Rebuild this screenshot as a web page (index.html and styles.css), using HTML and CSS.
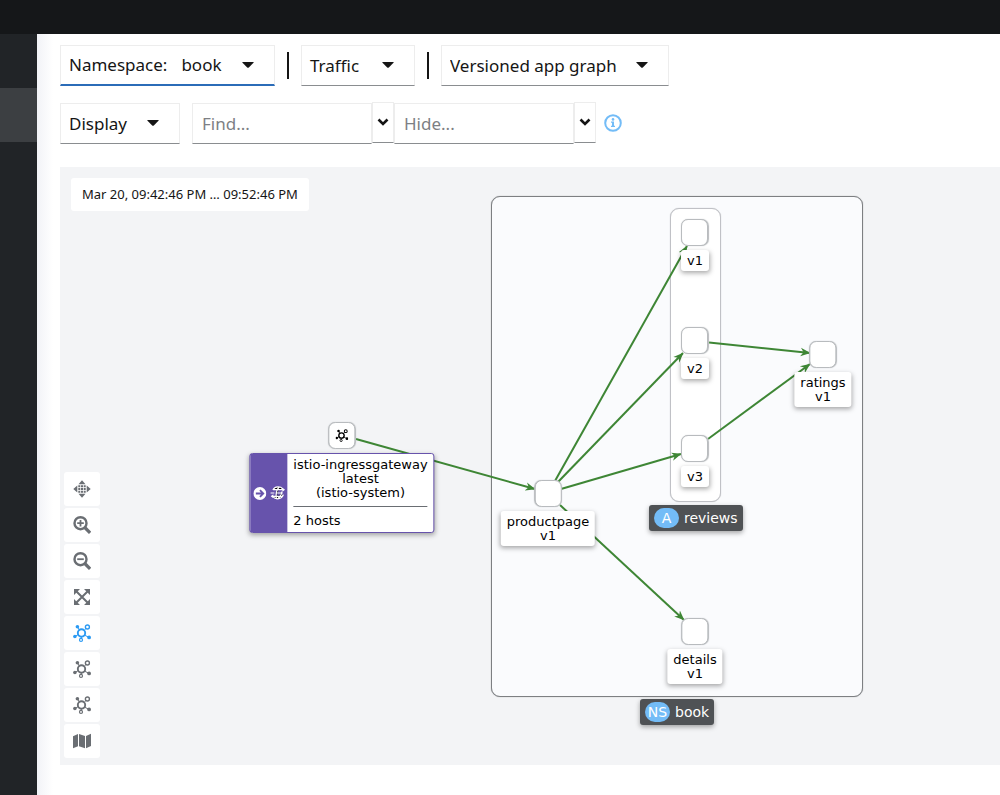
FILE: index.html
```html
<!DOCTYPE html>
<html lang="en">
<head>
<meta charset="utf-8">
<title>Graph</title>
<link rel="stylesheet" href="styles.css">
</head>
<body>
<svg class="defs" width="0" height="0" aria-hidden="true">
  <symbol id="caret" viewBox="0 0 12 6"><path d="M.8 0h10.4q.9 0 .3.8L6.800 5.500q-.8.700-1.600 0L.5.800Q-.1 0 .8 0z"/></symbol>
  <symbol id="chevron" viewBox="0 0 12 8"><path d="M1.500 1.500 6 6l4.500-4.500" fill="none" stroke="currentColor" stroke-width="2.600"/></symbol>
  <symbol id="topology" viewBox="0 0 18 18">
    <g fill="none" stroke="currentColor">
      <circle cx="8.500" cy="9" r="3.700" stroke-width="1.900"/>
      <circle cx="14.400" cy="3" r="2" stroke-width="1.400"/>
      <circle cx="8" cy="15.900" r="1.500" stroke-width="1.200"/>
      <path d="M11.300 6.200l1.700-1.700M6.400 6 4.500 3.200M5.200 10.600l-3 1.800M11.600 11.200l4.400 2.100M8.300 12.700v1.600" stroke-width="1"/>
    </g>
    <circle cx="4.400" cy="2.800" r="1.800"/><circle cx="1.900" cy="12.500" r="1.800"/><circle cx="16.100" cy="13.400" r="1.900"/>
  </symbol>
</svg>
<header class="masthead"></header>
<div class="shell">
  <nav class="sidebar" aria-label="Main"><a class="sidebar-active" href="#graph" aria-label="Graph"></a></nav>
  <main class="content">
    <div class="toolbar">
      <button class="toggle toggle-namespace" type="button" aria-haspopup="true"><span>Namespace:</span><span class="toggle-value">book</span><svg class="caret"><use href="#caret"/></svg></button>
      <span class="divider"></span>
      <button class="toggle toggle-traffic" type="button" aria-haspopup="true"><span>Traffic</span><svg class="caret"><use href="#caret"/></svg></button>
      <span class="divider"></span>
      <div class="select-wrap">
        <select class="toggle graph-type" aria-label="Graph type"><option>Versioned app graph</option></select>
        <svg class="caret select-caret"><use href="#caret"/></svg>
      </div>
    </div>
    <div class="toolbar">
      <button class="toggle toggle-display" type="button" aria-haspopup="true"><span>Display</span><svg class="caret"><use href="#caret"/></svg></button>
      <form class="find-hide">
        <input class="find-input" type="text" placeholder="Find..." aria-label="Find">
        <button class="find-menu" type="button" aria-label="Find presets"><svg class="chevron"><use href="#chevron"/></svg></button>
        <input class="find-input" type="text" placeholder="Hide..." aria-label="Hide">
        <button class="find-menu" type="button" aria-label="Hide presets"><svg class="chevron"><use href="#chevron"/></svg></button>
        <button class="info" type="button" aria-label="Find and hide help">
          <svg width="18" height="18" viewBox="0 0 18 18"><circle cx="9" cy="9" r="7.800" fill="none" stroke="currentColor" stroke-width="2"/><circle cx="9" cy="5.400" r="1.300"/><path d="M7 7.500h3v4.300h1V13H7v-1.200h1V8.700H7z"/></svg>
        </button>
      </form>
    </div>

    <section class="graph" id="graph" aria-label="Traffic graph">
      <div class="time-range">Mar 20, 09:42:46 PM … 09:52:46 PM</div>
      <div class="group group-book"></div>
      <div class="group group-reviews"></div>
      <svg class="edges" aria-hidden="true">
        <defs><marker id="arrow" viewBox="0 0 10 10" refX="9.500" refY="5" markerWidth="10" markerHeight="10" markerUnits="userSpaceOnUse" orient="auto"><path d="M0 .8 10 5 0 9.200l3-4.200z" fill="#3e8635"/></marker></defs>
        <g stroke="#3e8635" stroke-width="2">
          <path marker-end="url(#arrow)" d="M296 272 475 322"/>
          <path marker-end="url(#arrow)" d="M495 314 627 79"/>
          <path marker-end="url(#arrow)" d="M498 315 623 186"/>
          <path marker-end="url(#arrow)" d="M501 322 621 287"/>
          <path marker-end="url(#arrow)" d="M500 338 624 453"/>
          <path marker-end="url(#arrow)" d="M649 175.500 750 186"/>
          <path marker-end="url(#arrow)" d="M648 272 750 197"/>
        </g>
      </svg>

      <div class="node node-gateway">
        <span class="shape"><svg width="13" height="13"><use href="#topology"/></svg></span>
        <div class="host-label">
          <div class="host-badges">
            <svg width="13" height="13" viewBox="0 0 13 13"><circle cx="6.500" cy="6.500" r="6.500" fill="#fff"/><path d="M2.500 6.500h7M6.600 3.200l3.300 3.300-3.300 3.300" fill="none" stroke="#6753ac" stroke-width="1.800"/></svg>
            <svg width="15" height="14" viewBox="0 0 15 14" fill="none" stroke="#fff" stroke-width="1.200"><path d="M12.500 3A6 6 0 0 0 2.500 4M2.500 10.500A6 6 0 0 0 13 8.500M8.800 1Q5 5 6 12.500M11.500 5.500Q11 10 7 13M3 3.700h10M0 7h4M5.500 7h7M2 10.300h10"/><path d="M12 1.700l2.700 2L12 5.700zM3 8.300.3 10.300l2.700 2z" fill="#fff" stroke="none"/></svg>
          </div>
          <div class="host-body">
            <div class="host-name">istio-ingressgateway<br>latest<br>(istio-system)</div>
            <div class="host-count">2 hosts</div>
          </div>
        </div>
      </div>
      <div class="node node-productpage"><span class="shape"></span><div class="label">productpage<br>v1</div></div>
      <div class="node node-reviews-v1"><span class="shape"></span><div class="label">v1</div></div>
      <div class="node node-reviews-v2"><span class="shape"></span><div class="label">v2</div></div>
      <div class="node node-reviews-v3"><span class="shape"></span><div class="label">v3</div></div>
      <div class="node node-ratings"><span class="shape"></span><div class="label">ratings<br>v1</div></div>
      <div class="node node-details"><span class="shape"></span><div class="label">details<br>v1</div></div>
      <div class="tag tag-reviews"><span class="pill">A</span>reviews</div>
      <div class="tag tag-book"><span class="pill">NS</span>book</div>

      <div class="controls" role="toolbar" aria-label="Graph controls">
        <button type="button" aria-label="Drag"><svg viewBox="0 0 18 18"><path d="M9 .3 12.500 4.300h-7zM9 17.700l3.500-4h-7zM.3 9l4-3.500v7zM17.700 9l-4-3.500v7z"/><path d="M5.300 5.300h2v2h-2zM8 5.300h2v2H8zM10.700 5.300h2v2h-2zM5.300 8h2v2h-2zM8 8h2v2H8zM10.700 8h2v2h-2zM5.300 10.700h2v2h-2zM8 10.700h2v2H8zM10.700 10.700h2v2h-2z"/></svg></button>
        <button type="button" aria-label="Zoom in"><svg viewBox="0 0 18 18"><g fill="none" stroke="currentColor"><circle cx="7.500" cy="7.200" r="6" stroke-width="2.400"/><path d="M11.800 11.500l5.300 5.300" stroke-width="3.200"/><path d="M4.200 7.200h6.600M7.500 4v6.400" stroke-width="1.800"/></g></svg></button>
        <button type="button" aria-label="Zoom out"><svg viewBox="0 0 18 18"><g fill="none" stroke="currentColor"><circle cx="7.500" cy="7.200" r="6" stroke-width="2.400"/><path d="M11.800 11.500l5.300 5.300" stroke-width="3.200"/><path d="M4.200 7.200h6.600" stroke-width="1.800"/></g></svg></button>
        <button type="button" aria-label="Zoom to fit"><svg viewBox="0 0 18 18"><path d="M3 3l12 12M15 3 3 15" stroke="currentColor" stroke-width="2"/><path d="M1 1h6L1 7zM17 1v6l-6-6zM1 17v-6l6 6zM17 17h-6l6-6z"/></svg></button>
        <button class="selected" type="button" aria-label="Layout default" aria-pressed="true"><svg><use href="#topology"/></svg></button>
        <button type="button" aria-label="Layout 1"><svg><use href="#topology"/></svg></button>
        <button type="button" aria-label="Layout 2"><svg><use href="#topology"/></svg></button>
        <button type="button" aria-label="Legend"><svg viewBox="0 0 18 18"><path d="M0 4.300 5 2v12.300l-5 2zM6 2l6 2v12.300l-6-2zM13 4l5-2.300V14l-5 2.300z"/></svg></button>
      </div>
    </section>
  </main>
</div>
</body>
</html>
```
FILE: styles.css
```css
* { box-sizing: border-box; }

body {
  margin: 0;
  min-height: 100vh;
  display: flex;
  flex-direction: column;
  background: #fff;
  color: #151515;
  font-family: "Noto Sans", sans-serif;
  font-size: 17px;
}

button, input, select { font: inherit; color: inherit; margin: 0; border-radius: 0; }
svg { display: block; fill: currentColor; }
.defs { position: absolute; }

.masthead { height: 34px; background: #151719; }
.shell { flex: 1; display: flex; }
.sidebar { width: 37px; padding-top: 54px; background: #212427; }
.sidebar-active { display: block; height: 54px; background: #3c3f42; }

.content {
  flex: 1;
  min-width: 0;
  display: flex;
  flex-direction: column;
  padding: 11px 0 30px 23px;
  background: linear-gradient(to right, #f2f3f7, #fff 16px);
}

.toolbar { display: flex; align-items: center; gap: 12px; height: 40px; margin-bottom: 18px; }

.toggle {
  display: flex;
  align-items: center;
  height: 41px;
  padding: 0 20px 0 8px;
  border: 1px solid #ededed;
  border-bottom-color: #8a8d90;
  background: #fff;
}
.toggle-namespace { width: 215px; border-bottom: 2px solid #2b6cb8; }
.toggle-traffic { width: 114px; }
.toggle-display { width: 120px; }
.toggle-value { margin-left: 14px; }
.caret { width: 12px; height: 6px; margin-left: auto; }
.divider { width: 2px; height: 27px; background: #151515; }

.select-wrap { display: grid; width: 228px; align-items: center; }
.graph-type { grid-area: 1 / 1; appearance: none; width: 100%; }
.select-caret { grid-area: 1 / 1; margin-right: 21px; pointer-events: none; }

.find-hide { display: flex; align-items: center; }
.find-input {
  width: 180px;
  height: 41px;
  padding: 0 9px;
  border: 1px solid #ededed;
  border-bottom-color: #8a8d90;
  background: #fff;
}
.find-input::placeholder { color: #7d8084; opacity: 1; }
.find-menu {
  display: grid;
  place-items: center;
  width: 22px;
  height: 41px;
  margin-bottom: 2px;
  padding: 0;
  border: 1px solid #ededed;
  border-bottom-color: #8a8d90;
  background: #fff;
}
.chevron { width: 12px; height: 8px; }
.info { margin-left: 8px; padding: 0; border: 0; background: none; color: #73bcf7; }

.graph {
  position: relative;
  flex: 1;
  min-height: 598px;
  margin-top: 6px;
  overflow: hidden;
  background: #f3f4f6;
  font-family: "DejaVu Sans", sans-serif;
  font-size: 13px;
  line-height: 14px;
  color: #000;
}
.time-range {
  position: absolute;
  left: 11px;
  top: 11px;
  padding: 7px 11px;
  border-radius: 3px;
  background: #fff;
  color: #151515;
  font-family: "Noto Sans", sans-serif;
  font-size: 13px;
  line-height: 19px;
}

.group { position: absolute; border-radius: 9px; }
.group-book { left: 431px; top: 29px; width: 372px; height: 501px; border: 1px solid #7d7f82; background: #fafbfd; box-shadow: 0 0 1px #8a8d90; }
.group-reviews { left: 610px; top: 41px; width: 51px; height: 294px; border: 1px solid #c0c1c6; background: #fff; box-shadow: 0 0 1px #b8bbbe; }
.edges { position: absolute; inset: 0; width: 100%; height: 100%; }

.node {
  position: absolute;
  display: flex;
  flex-direction: column;
  align-items: center;
  gap: 4px;
  transform: translateX(-50%);
}
.node-gateway { left: 282px; top: 255px; }
.node-productpage { left: 488px; top: 313px; }
.node-reviews-v1 { left: 635px; top: 52px; }
.node-reviews-v2 { left: 635px; top: 160px; }
.node-reviews-v3 { left: 635px; top: 268px; }
.node-ratings { left: 763px; top: 174px; }
.node-details { left: 635px; top: 451px; }
.shape {
  display: grid;
  place-items: center;
  width: 27px;
  height: 27px;
  border: 1px solid #b8bbbe;
  border-radius: 7px;
  background: #fff;
  box-shadow: 0 0 1px #b8bbbe;
}
.label {
  padding: 4px 6px 3px;
  border-radius: 3px;
  background: #fff;
  box-shadow: 0 2px 5px rgba(0, 0, 0, .35);
  text-align: center;
  white-space: nowrap;
}

.host-label {
  display: flex;
  border: 1px solid #6753ac;
  border-radius: 3px;
  background: #fff;
  box-shadow: 0 2px 5px rgba(0, 0, 0, .35);
  white-space: nowrap;
}
.host-badges { display: flex; align-items: center; gap: 4px; padding: 0 2px 0 3px; background: #6753ac; }
.host-body { padding: 4px 6px 4px; }
.host-name { padding-bottom: 6px; border-bottom: 1px solid #6a6e73; text-align: center; }
.host-count { padding-top: 7px; }

.tag {
  position: absolute;
  display: flex;
  align-items: center;
  gap: 5px;
  height: 26px;
  padding: 0 5px;
  border-radius: 3px;
  background: #4f5255;
  box-shadow: 0 2px 5px rgba(0, 0, 0, .35);
  color: #fff;
  font-size: 14px;
}
.tag-reviews { left: 589px; top: 338px; }
.tag-book { left: 580px; top: 532px; }
.pill { width: 25px; border-radius: 10px; background: #73bcf7; line-height: 20px; text-align: center; }

.controls { position: absolute; left: 4px; bottom: 7px; display: flex; flex-direction: column; gap: 2px; }
.controls button {
  display: grid;
  place-items: center;
  width: 36px;
  height: 34px;
  padding: 0;
  border: 0;
  border-radius: 3px;
  background: #fff;
  color: #6a6e73;
}
.controls .selected { color: #2b9af3; }
.controls svg { width: 18px; height: 18px; }
```
